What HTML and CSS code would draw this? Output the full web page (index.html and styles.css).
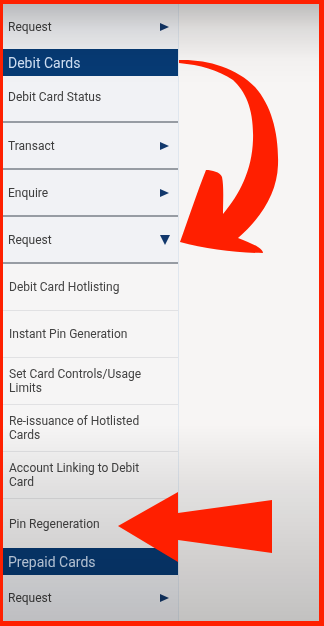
FILE: index.html
```html
<!DOCTYPE html>
<html>
<head>
<meta charset="utf-8">
<link rel="stylesheet" href="styles.css">
</head>
<body>
<div class="frame">
  <nav class="menu">
    <div class="row first"><span>Request</span><i class="tri-right"></i></div>
    <div class="section">Debit Cards</div>
    <div class="row status">Debit Card Status</div>
    <div class="row"><span>Transact</span><i class="tri-right"></i></div>
    <div class="row"><span>Enquire</span><i class="tri-right"></i></div>
    <div class="row"><span>Request</span><i class="tri-down"></i></div>
    <div class="sub">Debit Card Hotlisting</div>
    <div class="sub">Instant Pin Generation</div>
    <div class="sub">Set Card Controls/Usage Limits</div>
    <div class="sub">Re-issuance of Hotlisted Cards</div>
    <div class="sub">Account Linking to Debit Card</div>
    <div class="sub last">Pin Regeneration</div>
    <div class="section">Prepaid Cards</div>
    <div class="row end"><span>Request</span><i class="tri-right"></i></div>
  </nav>
  <div class="vignette"></div>
  <svg class="arrows" width="324" height="626" viewBox="0 0 324 626">
    <path fill="#ff1f00" d="M179,60 C205,59 236,67 255,87 C272,106 279,135 278,165 C277,192 263,216 238,238 C246,241 253,244 258,247 C261,249 263,251 263,253 C236,253 205,249 180,242 C188,220 198,190 206,170 C212,170 220,172 222,177 C224,186 223,203 223,214 C240,194 252,170 253,140 C254,110 246,92 233,80 C218,70 200,65 179,63 Z"/>
    <polygon fill="#ff1f00" points="118,526 178,492 178,513 272,500 272,553 178,540 178,562"/>
  </svg>
</div>
</body>
</html>
```

FILE: styles.css
```css
html, body {
  margin: 0;
  padding: 0;
  background: #ffffff;
}

.frame {
  position: relative;
  width: 324px;
  height: 626px;
  box-sizing: border-box;
  border-style: solid;
  border-color: #ff2000;
  border-width: 4px 5px 5px 3px;
  background: #f7f5f4;
  overflow: hidden;
  font-family: Roboto, "Noto Sans", sans-serif;
}

.menu {
  width: 176px;
  height: 100%;
  box-sizing: border-box;
  background: #f1f2f5;
  border-right: 1px solid #dfe6ee;
  display: flex;
  flex-direction: column;
}

.row {
  height: 47px;
  flex: none;
  box-sizing: border-box;
  border-bottom: 2px solid #979ca3;
  display: flex;
  align-items: center;
  justify-content: space-between;
  padding: 0 9px 0 5px;
  font-size: 12px;
  color: #3e3e3e;
}

.row.first {
  height: 45px;
  border-bottom: none;
}

.row.status {
  padding-bottom: 4px;
}

.row.end {
  flex: 1;
  border-bottom: none;
}

.section {
  height: 27px;
  flex: none;
  box-sizing: border-box;
  background: #063a74;
  color: #d2e2f6;
  font-size: 14px;
  display: flex;
  align-items: center;
  padding: 0 5px;
}

.sub {
  height: 47px;
  flex: none;
  box-sizing: border-box;
  border-bottom: 1px solid #e1e1e3;
  display: flex;
  align-items: center;
  padding: 0 24px 0 6px;
  font-size: 12px;
  line-height: 14px;
  color: #434343;
  background: #f6f5f5;
}

.sub.last {
  height: 49px;
  border-bottom: none;
}

.tri-right {
  width: 0;
  height: 0;
  border-left: 9px solid #12386c;
  border-top: 4.5px solid transparent;
  border-bottom: 4.5px solid transparent;
}

.tri-down {
  width: 0;
  height: 0;
  margin-right: -1px;
  border-top: 10px solid #12386c;
  border-left: 5.5px solid transparent;
  border-right: 5.5px solid transparent;
}

.vignette {
  position: absolute;
  inset: 0;
  pointer-events: none;
  mix-blend-mode: multiply;
  background: linear-gradient(to bottom,
    rgba(0, 0, 0, 0.23) 0px,
    rgba(0, 0, 0, 0.10) 25px,
    rgba(0, 0, 0, 0.02) 55px,
    rgba(0, 0, 0, 0) 80px,
    rgba(0, 0, 0, 0) 420px,
    rgba(0, 0, 0, 0.08) 480px,
    rgba(0, 0, 0, 0.21) 100%);
}

.arrows {
  position: absolute;
  left: -3px;
  top: -4px;
  pointer-events: none;
}
```
